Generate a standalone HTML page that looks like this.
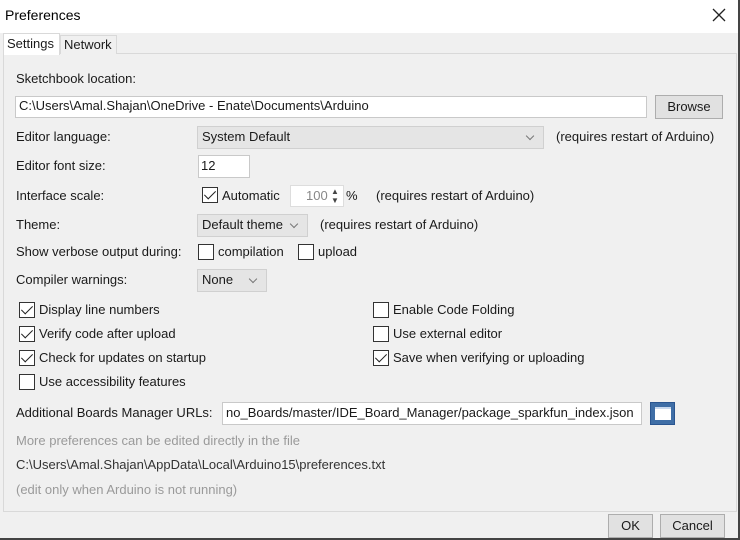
<!DOCTYPE html>
<html><head><meta charset="utf-8"><style>
*{margin:0;padding:0;box-sizing:border-box}
body{width:740px;height:540px;position:relative;overflow:hidden;background:#f0f0f0;font-family:"Liberation Sans",sans-serif;font-size:13px;color:#1a1a1a}
.a{position:absolute;white-space:nowrap;line-height:16px}
.box{position:absolute;background:#fff;border:1px solid #c9c9c9}
.sel{position:absolute;background:#e5e5e5;border:1px solid #d0d0d0;line-height:20px;padding-left:4px}
.sel:after{content:"";position:absolute;right:10px;top:6px;width:5px;height:5px;border-right:1px solid #777;border-bottom:1px solid #777;transform:rotate(45deg)}
.cb{position:absolute;width:16px;height:16px;border:1px solid #333;background:#fff}
.cb.c:after{content:"";position:absolute;left:4px;top:0px;width:5px;height:10px;border-right:1.5px solid #222;border-bottom:1.5px solid #222;transform:rotate(45deg)}
.btn{position:absolute;background:#e1e1e1;border:1px solid #adadad;text-align:center;line-height:21px}
.g{color:#9a9a9a}
</style></head><body>
<div style="position:absolute;left:0;top:0;width:740px;height:33px;background:#fff"></div>
<div class="a" style="left:5px;top:7px;font-size:14px;color:#000">Preferences</div>
<svg style="position:absolute;left:712px;top:8px" width="14" height="14"><path d="M1 1L13 13M13 1L1 13" stroke="#222" stroke-width="1.3"/></svg>
<div style="position:absolute;left:3px;top:53px;width:734px;height:459px;border:1px solid #d9d9d9;background:#f0f0f0"></div>
<div style="position:absolute;left:3px;top:33px;width:57px;height:22px;background:#fff;border:1px solid #d9d9d9;border-bottom:none"></div>
<div class="a" style="left:7px;top:36px">Settings</div>
<div style="position:absolute;left:60px;top:35px;width:57px;height:19px;background:#f0f0f0;border:1px solid #d9d9d9;border-bottom:none"></div>
<div class="a" style="left:64px;top:37px">Network</div>

<div class="a" style="left:16px;top:71px">Sketchbook location:</div>
<div class="box" style="left:15px;top:96px;width:632px;height:22px"></div>
<div class="a" style="left:19px;top:98px">C:\Users\Amal.Shajan\OneDrive - Enate\Documents\Arduino</div>
<div class="btn" style="left:655px;top:95px;width:68px;height:24px">Browse</div>

<div class="a" style="left:16px;top:129px">Editor language:</div>
<div class="sel" style="left:197px;top:126px;width:347px;height:23px">System Default</div>
<div class="a" style="left:556px;top:129px">(requires restart of Arduino)</div>

<div class="a" style="left:16px;top:158px">Editor font size:</div>
<div class="box" style="left:198px;top:155px;width:52px;height:23px"></div>
<div class="a" style="left:201px;top:158px">12</div>

<div class="a" style="left:16px;top:188px">Interface scale:</div>
<div class="cb c" style="left:202px;top:187px"></div>
<div class="a" style="left:222px;top:188px">Automatic</div>
<div class="box" style="left:290px;top:185px;width:54px;height:22px;border-color:#ddd"></div>
<div class="a" style="left:306px;top:188px;color:#888">100</div>
<div class="a" style="left:331px;top:184px;font-size:8px;color:#444">▲</div>
<div class="a" style="left:331px;top:193px;font-size:8px;color:#444">▼</div>
<div class="a" style="left:346px;top:188px">%</div>
<div class="a" style="left:376px;top:188px">(requires restart of Arduino)</div>

<div class="a" style="left:16px;top:217px">Theme:</div>
<div class="sel" style="left:197px;top:214px;width:111px;height:23px">Default theme</div>
<div class="a" style="left:320px;top:217px">(requires restart of Arduino)</div>

<div class="a" style="left:16px;top:244px">Show verbose output during:</div>
<div class="cb" style="left:198px;top:244px"></div>
<div class="a" style="left:218px;top:244px">compilation</div>
<div class="cb" style="left:298px;top:244px"></div>
<div class="a" style="left:318px;top:244px">upload</div>

<div class="a" style="left:16px;top:272px">Compiler warnings:</div>
<div class="sel" style="left:197px;top:269px;width:70px;height:23px">None</div>

<div class="cb c" style="left:19px;top:302px"></div><div class="a" style="left:39px;top:302px">Display line numbers</div>
<div class="cb c" style="left:19px;top:326px"></div><div class="a" style="left:39px;top:326px">Verify code after upload</div>
<div class="cb c" style="left:19px;top:350px"></div><div class="a" style="left:39px;top:350px">Check for updates on startup</div>
<div class="cb" style="left:19px;top:374px"></div><div class="a" style="left:39px;top:374px">Use accessibility features</div>
<div class="cb" style="left:373px;top:302px"></div><div class="a" style="left:393px;top:302px">Enable Code Folding</div>
<div class="cb" style="left:373px;top:326px"></div><div class="a" style="left:393px;top:326px">Use external editor</div>
<div class="cb c" style="left:373px;top:350px"></div><div class="a" style="left:393px;top:350px">Save when verifying or uploading</div>

<div class="a" style="left:16px;top:405px">Additional Boards Manager URLs:</div>
<div class="box" style="left:222px;top:402px;width:420px;height:23px"></div>
<div class="a" style="left:226px;top:405px;width:412px;overflow:hidden">no_Boards/master/IDE_Board_Manager/package_sparkfun_index.json</div>
<div style="position:absolute;left:650px;top:402px;width:25px;height:23px;background:#3f6ea6;border:1px solid #2a5590"><div style="position:absolute;left:4px;top:4px;width:16px;height:13px;background:#fff;border-top:2px solid #c9d9ee"></div></div>

<div class="a g" style="left:16px;top:433px">More preferences can be edited directly in the file</div>
<div class="a" style="left:16px;top:457px;color:#333">C:\Users\Amal.Shajan\AppData\Local\Arduino15\preferences.txt</div>
<div class="a g" style="left:16px;top:482px">(edit only when Arduino is not running)</div>

<div class="btn" style="left:608px;top:514px;width:45px;height:24px">OK</div>
<div class="btn" style="left:660px;top:514px;width:65px;height:24px">Cancel</div>
<div style="position:absolute;left:738px;top:0;width:2px;height:540px;background:#444"></div>
<div style="position:absolute;left:0;top:538px;width:740px;height:2px;background:#444"></div>
</body></html>
